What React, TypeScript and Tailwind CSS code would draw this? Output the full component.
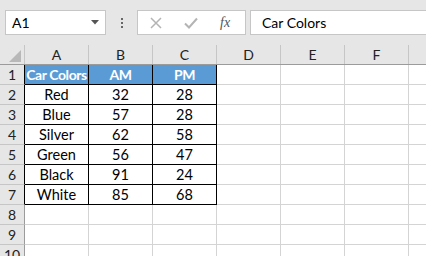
import React from "react";

const cols = ["A", "B", "C", "D", "E", "F", "G"];

const data: string[][] = [
  ["Car Colors", "AM", "PM"],
  ["Red", "32", "28"],
  ["Blue", "57", "28"],
  ["Silver", "62", "58"],
  ["Green", "56", "47"],
  ["Black", "91", "24"],
  ["White", "85", "68"],
];

const rows = [1, 2, 3, 4, 5, 6, 7, 8, 9, 10];

const Cell = ({ r, c }: { r: number; c: number }) => {
  const inTable = r < data.length && c < 3;
  if (!inTable) {
    return <div className="h-[20px] w-[64px] shrink-0 border-r border-b border-[#d4d4d4]" />;
  }
  const head = r === 0;
  return (
    <div
      className={
        "flex h-[20px] w-[64px] shrink-0 items-center justify-center overflow-hidden whitespace-nowrap border-r border-b border-black " +
        (head
          ? "bg-[#5b9bd5] text-[14px] font-bold tracking-[-0.4px] text-white"
          : "bg-white text-[14.5px] text-black")
      }
    >
      {data[r][c]}
    </div>
  );
};

export default function App() {
  return (
    <div
      className="h-[256px] w-[426px] overflow-hidden bg-white"
      style={{ fontFamily: '"Lato", "Liberation Sans", sans-serif' }}
    >
      {/* formula bar */}
      <div className="flex h-[45px] items-start bg-[#e6e6e6] pt-[10px]">
        <div className="ml-[5px] flex h-[25px] w-[101px] items-center justify-between border border-[#c6c6c6] bg-white pl-[6px] pr-[6px] text-[14px] text-black">
          <span>A1</span>
          <svg width="8" height="5" viewBox="0 0 8 5">
            <path d="M0 0h8L4 4.5z" fill="#555" />
          </svg>
        </div>
        <div className="flex h-[25px] w-[31px] flex-col items-center justify-center gap-[2px]">
          <span className="h-[2px] w-[2px] bg-[#666]" />
          <span className="h-[2px] w-[2px] bg-[#666]" />
          <span className="h-[2px] w-[2px] bg-[#666]" />
        </div>
        <div className="flex h-[25px] w-[109px] items-center border border-[#c6c6c6] bg-white">
          <svg width="12" height="12" viewBox="0 0 12 12" className="ml-[12px]">
            <path d="M1 1l10 10M11 1L1 11" stroke="#b4b4b4" strokeWidth="1.5" />
          </svg>
          <svg width="14" height="12" viewBox="0 0 14 12" className="ml-[22px]">
            <path d="M1 6.5l4 4L13 1.5" stroke="#b4b4b4" strokeWidth="2" fill="none" />
          </svg>
          <span
            className="ml-[22px] text-[14px] italic text-[#555]"
            style={{ fontFamily: '"Liberation Serif", serif' }}
          >
            fx
          </span>
        </div>
        <div className="ml-[4px] flex h-[25px] flex-1 items-center border border-r-0 border-[#c6c6c6] bg-white pl-[11px] text-[14px] text-black">
          Car Colors
        </div>
      </div>

      {/* column headers */}
      <div className="flex h-[20px] border-b border-[#9b9b9b] bg-[#e6e6e6]">
        <div className="relative h-full w-[25px] shrink-0 border-r border-[#c6c6c6]">
          <svg width="12" height="12" viewBox="0 0 12 12" className="absolute bottom-[2px] right-[3px]">
            <path d="M12 0v12H0z" fill="#b8b8b8" />
          </svg>
        </div>
        {cols.map((c) => (
          <div
            key={c}
            className="flex h-full w-[64px] shrink-0 items-center justify-center border-r border-[#c6c6c6] text-[14px] text-[#222]"
          >
            {c}
          </div>
        ))}
      </div>

      {/* rows */}
      {rows.map((n, r) => (
        <div key={n} className="flex">
          <div
            className={
              "flex h-[20px] w-[25px] shrink-0 items-center justify-center border-r border-b border-b-[#c6c6c6] bg-[#e6e6e6] text-[14px] text-[#222] " +
              (r < data.length ? "border-r-black" : "border-r-[#9b9b9b]")
            }
          >
            {n}
          </div>
          {cols.map((c, ci) => (
            <Cell key={c} r={r} c={ci} />
          ))}
        </div>
      ))}
    </div>
  );
}
